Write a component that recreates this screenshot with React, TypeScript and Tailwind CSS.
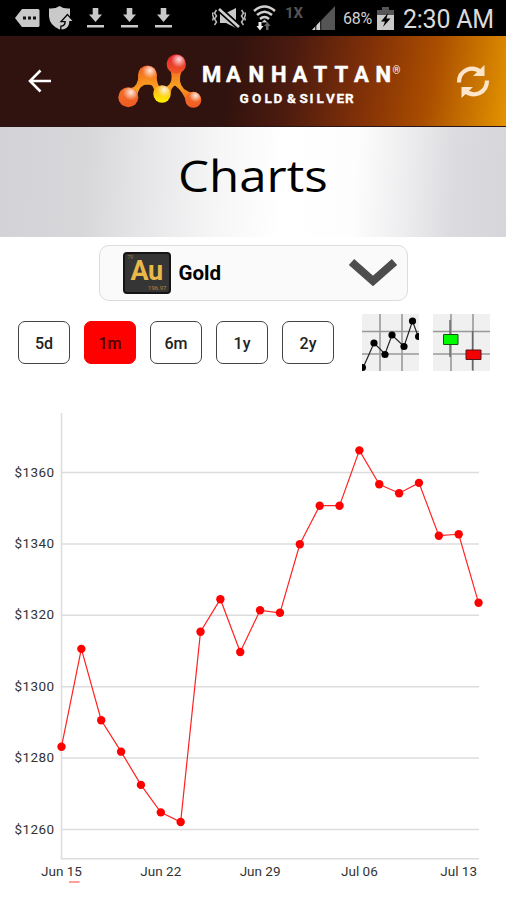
import clsx from "clsx";

const PRICES = [
  1283.2, 1310.6, 1290.6, 1281.8, 1272.5, 1264.8, 1262.1, 1315.4, 1324.5,
  1309.7, 1321.4, 1320.7, 1339.9, 1350.7, 1350.7, 1366.2, 1356.7, 1354.2,
  1357.1, 1342.3, 1342.7, 1323.5,
];
const TICKS = [1360, 1340, 1320, 1300, 1280, 1260];
const DATES = ["Jun 15", "Jun 22", "Jun 29", "Jul 06", "Jul 13"];
const RANGES = ["5d", "1m", "6m", "1y", "2y"];

const xAt = (i: number) => 61.5 + i * 19.86;
const yAt = (price: number) => 72.5 + (1360 - price) * 3.57;

function DownloadIcon() {
  return (
    <svg width="17" height="20" viewBox="0 0 17 20" fill="#c9c9c9">
      <path d="M5.700 0h5.600v6.500H15L8.500 14 2 6.500h3.700zM0 17h17v2.400H0z" />
    </svg>
  );
}

function StatusBar() {
  return (
    <div className="flex h-9 items-center bg-black pl-[15px] text-[#c9c9c9]">
      <svg width="25" height="18" viewBox="0 0 25 18">
        <path d="M7 0h16q1.500 0 1.500 1.500v15q0 1.500-1.500 1.500H7L0 9z" fill="#c9c9c9" />
        <path d="M8 7.500h3v3H8zM13 7.500h3v3h-3zM18 7.500h3v3h-3z" fill="#111" />
      </svg>
      <svg className="ml-2" width="26" height="26" viewBox="0 0 26 26">
        <path
          d="M11.500 1q4 3 10.500 2.500v7.500Q21.500 19 11.500 24.500 1.500 20 1 11.500V3.500q6.500.500 10.500-2.500z"
          fill="#c9c9c9"
        />
        <path
          d="M19.500 10.500l5 5.500h-3.200c.200 5-2.500 8-7.800 8.500v-2.700c3.200-.300 4.500-2.300 4.300-5.800h-3.300z"
          fill="#c9c9c9"
          stroke="#000"
          strokeWidth="2.600"
          paintOrder="stroke"
        />
      </svg>
      <div className="ml-[13px] flex gap-[17px]">
        <DownloadIcon />
        <DownloadIcon />
        <DownloadIcon />
      </div>
      <svg className="ml-10" width="34" height="22" viewBox="0 0 34 22" fill="none">
        <path d="M8 6h6l10-5v20l-10-5H8z" fill="#c9c9c9" />
        <path d="M7 2l19 17" stroke="#000" strokeWidth="6" />
        <path d="M7 2l20 18" stroke="#d0d0d0" strokeWidth="2.600" />
        <path
          d="M4.500 3l-2 3 2 3-2 3 2 3-2 3M1 5.500l-.5 2 1 3-1 3M29.500 3l2 3-2 3 2 3-2 3 2 3M33 5.500l.5 2-1 3 1 3"
          stroke="#bbb"
          strokeWidth="1.500"
        />
      </svg>
      <svg className="ml-[7px]" width="23" height="26" viewBox="0 0 23 26" fill="none">
        <g stroke="#d0d0d0" strokeWidth="2.500">
          <path d="M1 6q10.500-9 21 0M4 10q7.500-6.500 15 0M7 14q4.500-4 9 0" />
        </g>
        <path d="M11.500 14.500l3 3h-6z" fill="#d0d0d0" />
        <path d="M5.500 17h3v4h2L7 25.500 3.500 21h2z" fill="#eee" />
        <path d="M15.500 25h-2.500v-4h-2l3.500-4 3 4h-2z" fill="#666" />
      </svg>
      <span className="mb-[10px] ml-[9px] w-[19px] font-['Roboto',sans-serif] text-[15px] leading-none font-bold text-[#555]">
        1X
      </span>
      <svg className="ml-[8px]" width="23" height="24" viewBox="0 0 23 24">
        <path d="M23 0v24H0z" fill="#555" />
        <path d="M9 14.600V24H0z" fill="#d0d0d0" />
        <path d="M3.800 17v7M8.700 13v11" stroke="#000" strokeWidth="1" />
      </svg>
      <span className="mt-[2px] ml-[8px] w-[32px] font-['Roboto',sans-serif] text-[16px] leading-none tracking-[-0.2px] text-[#d0d0d0]">
        68%
      </span>
      <svg className="ml-[2px]" width="17" height="23" viewBox="0 0 17 23">
        <path d="M5 0h7v3h5v6H0V3h5z" fill="#555" />
        <path d="M0 8h17v15H0z" fill="#c9c9c9" />
        <path d="M11 6l-7 8.500h4L6 20l7.500-8.500H9.500z" fill="#000" />
      </svg>
      <span className="mt-[3px] ml-[9px] font-['Roboto',sans-serif] text-[25px] leading-none tracking-[-0.25px] whitespace-nowrap text-[#dadada]">
        2:30 AM
      </span>
    </div>
  );
}

function Logo() {
  return (
    <svg width="290" height="62" viewBox="116 52 290 62">
      <defs>
        <linearGradient id="bond" gradientUnits="userSpaceOnUse" x1="150" y1="60" x2="154" y2="106">
          <stop offset="0" stopColor="#ee4823" />
          <stop offset=".6" stopColor="#f9a020" />
          <stop offset="1" stopColor="#f26522" />
        </linearGradient>
        <radialGradient id="shine" cx=".62" cy=".28" r=".5">
          <stop offset="0" stopColor="#fff" stopOpacity=".85" />
          <stop offset="1" stopColor="#fff" stopOpacity="0" />
        </radialGradient>
        <linearGradient id="orange" x1="0" y1="0" x2="0" y2="1">
          <stop offset="0" stopColor="#f3702a" />
          <stop offset="1" stopColor="#ef5a22" />
        </linearGradient>
        <linearGradient id="amber" x1="0" y1="0" x2="0" y2="1">
          <stop offset="0" stopColor="#f15a24" />
          <stop offset="1" stopColor="#f99b1c" />
        </linearGradient>
        <linearGradient id="yellow" x1="0" y1="0" x2="0" y2="1">
          <stop offset="0" stopColor="#fba81c" />
          <stop offset="1" stopColor="#fff200" />
        </linearGradient>
        <linearGradient id="red" x1="0" y1="0" x2="0" y2="1">
          <stop offset="0" stopColor="#e3202a" />
          <stop offset="1" stopColor="#f15a29" />
        </linearGradient>
      </defs>
      {/* Bonds between the atoms */}
      <path
        d="M131 88Q138 87 138.500 75L156.500 74Q156.500 82 159 86L166 87Q174 83 170.500 70H182Q177 82 184 89 188 92 193 93L187 104Q184 92 175 85.500 171 87 170 96L154.500 98Q155 89 152 85.500 146 83 141 87 137 91 137 100z"
        fill="url(#bond)"
      />
      <circle cx="128.300" cy="97.300" r="10" fill="url(#orange)" />
      <circle cx="147.500" cy="75" r="9.500" fill="url(#amber)" />
      <circle cx="162" cy="94" r="8.700" fill="url(#yellow)" />
      <circle cx="176.300" cy="64" r="9.700" fill="url(#red)" />
      <circle cx="193.300" cy="99.800" r="8" fill="url(#orange)" />
      <g fill="url(#shine)">
        <circle cx="129" cy="96" r="8" />
        <circle cx="148" cy="74" r="8" />
        <circle cx="162.500" cy="93" r="7.500" />
        <circle cx="177" cy="63" r="8" />
        <circle cx="194" cy="98.500" r="6.500" />
      </g>
      <text
        x="202 226 248.500 271 292.500 313.500 334.500 354 375.500"
        y="82"
        fill="#fff"
        stroke="#fff"
        strokeWidth=".5"
        strokeLinejoin="round"
        className="font-['Roboto',sans-serif] text-[22px] font-bold"
      >
        MANHATTAN
      </text>
      <text x="392.500" y="74" fill="#fff" className="font-['Roboto',sans-serif] text-[10px] font-medium">
        ®
      </text>
      <text
        x="239.500 252 264.500 273.500 283 287 297 299.500 309.500 316.500 326 336.500 345"
        y="102.500"
        fill="#fff"
        stroke="#fff"
        strokeWidth=".3"
        className="font-['Roboto',sans-serif] text-[13.5px] font-bold"
      >
        GOLD &amp; SILVER
      </text>
    </svg>
  );
}

function Header() {
  return (
    <header className="flex h-[91px] items-center border-b border-[#291417] bg-[linear-gradient(100deg,#30120e_0%,#30120e_45%,#4c1b0f_57%,#833107_72%,#a94d00_84%,#dc8b00_98%,#e29300_100%)]">
      <svg className="ml-7" width="24" height="24" viewBox="0 0 24 24" fill="none" stroke="#fff" strokeWidth="2.600">
        <path d="M23 12H2M12.500 1.500L2 12l10.500 10.500" />
      </svg>
      <div className="mt-1 ml-16">
        <Logo />
      </div>
      <svg className="mt-[2px] ml-[50px]" width="34" height="36" viewBox="0 0 34 36" fill="none">
        <g stroke="#fde5cb" strokeWidth="4.200">
          <path d="M3 18.500C3 6 16 1 25 8" />
          <path d="M31 16.500C31 29 18 34 9 27" />
        </g>
        <path d="M28.500 1v11H17zM5.500 34V23H17z" fill="#fde5cb" />
      </svg>
    </header>
  );
}

function MetalSelect() {
  return (
    <button className="mx-auto mt-2 flex h-[56px] w-[309px] items-center rounded-[10px] border border-[#dcdcdc] bg-[#fafafa] pl-[23px]">
      <span className="flex h-[42px] w-12 flex-col rounded-[4px] border-2 border-[#151515] bg-[#353535] font-['Roboto',sans-serif] text-[#e8b84b]">
        <span className="pl-[3px] text-left text-[5px] leading-[6px] text-[#9a7b35]">79</span>
        <span className="text-center text-[27px] leading-[23px] font-bold tracking-[-0.5px]">Au</span>
        <span className="mt-[2px] pr-[2px] text-right text-[6px] leading-[6px] text-[#b08c3c]">
          196.97
        </span>
      </span>
      <span className="ml-2 font-['Roboto',sans-serif] text-[20.5px] font-bold text-black">Gold</span>
      <svg className="mr-[9px] ml-auto" width="50" height="30" viewBox="0 0 50 30" fill="none">
        <path d="M3.500 4L25 23 46.500 4" stroke="#4d4d4d" strokeWidth="8" />
      </svg>
    </button>
  );
}

function LineThumb() {
  return (
    <svg width="57" height="57" viewBox="0 0 57 57" fill="none">
      <path d="M0 0h57v57H0z" fill="#f0f0f0" />
      <path d="M18 0v57M40 0v57M0 17.500h57M0 40h57" stroke="#999" strokeWidth="1.600" />
      <path d="M1 54L12 29 23 40 30 21 42 32.500 50.500 7 56 22" stroke="#222" strokeWidth="1.200" />
      <g fill="#000">
        <circle cx="0.500" cy="53.500" r="3.500" />
        <circle cx="12" cy="29" r="3.600" />
        <circle cx="23" cy="40.500" r="3.600" />
        <circle cx="30" cy="21" r="3.600" />
        <circle cx="42" cy="32.500" r="3.600" />
        <circle cx="50.500" cy="7" r="3.600" />
        <circle cx="56.500" cy="22.500" r="3.500" />
      </g>
    </svg>
  );
}

function CandleThumb() {
  return (
    <svg width="57" height="57" viewBox="0 0 57 57" fill="none">
      <path d="M0 0h57v57H0z" fill="#f0f0f0" />
      <path d="M18 0v57M40 0v57M0 17.500h57M0 40h57" stroke="#999" strokeWidth="1.600" />
      <path d="M17 6v37M39.500 17v39" stroke="#666" strokeWidth="1.400" />
      <path d="M10.500 20.500h14.500v10H10.500z" fill="#00fb00" stroke="#185018" />
      <path d="M33 36h15v9.500H33z" fill="#f50000" stroke="#501818" />
    </svg>
  );
}

function PriceChart() {
  const points = PRICES.map((p, i) => `${xAt(i)},${yAt(p)}`).join(" ");

  return (
    <svg
      width="506"
      height="500"
      viewBox="0 0 506 500"
      className="block font-['Roboto',sans-serif] text-[13.5px]"
    >
      {/* Grid and axes */}
      {TICKS.map((t) => (
        <g key={t}>
          <path d={`M61 ${yAt(t)}H479`} stroke="#dcdcdc" strokeWidth="1.500" />
          <text x="14.500" y={yAt(t) + 4} fill="#333" textLength="39.500">
            ${t}
          </text>
        </g>
      ))}
      <path d="M61.500 13V458.800H479" fill="none" stroke="#dcdcdc" strokeWidth="1.500" />
      {DATES.map((d, i) => (
        <text key={d} x={xAt(i * 5)} y="475.500" fill="#333" textAnchor="middle">
          {d}
        </text>
      ))}
      <path d="M69 482h10.500" stroke="#f66" strokeWidth="1.300" />

      {/* Series */}
      <polyline points={points} fill="none" stroke="#f22" strokeWidth="1.200" />
      {PRICES.map((p, i) => (
        <circle key={i} cx={xAt(i)} cy={yAt(p)} r="4.200" fill="#f00" />
      ))}
    </svg>
  );
}

export default function App() {
  return (
    <div className="flex h-[900px] w-[506px] flex-col overflow-hidden bg-white">
      <StatusBar />
      <Header />
      <div className="flex h-[110px] justify-center bg-[linear-gradient(93deg,#d3d2d6_0%,#d7d7da_17%,#e6e6e8_29%,#f6f6f7_43%,#fff_56%,#fdfdfd_70%,#ededef_80%,#dcdce0_89%,#d6d6da_100%)] pt-[23px]">
        <h1 className="scale-x-[1.12] font-['Open_Sans',sans-serif] text-[44px] leading-[50px] text-black">
          Charts
        </h1>
      </div>
      <MetalSelect />

      {/* Range and chart type */}
      <div className="mt-[13px] flex h-[57px] items-center pl-[18px]">
        <div className="flex gap-[14px]">
          {RANGES.map((r) => (
            <button
              key={r}
              className={clsx(
                "h-[43px] w-[52px] rounded-[7px] border pt-[2px] font-['Roboto',sans-serif] text-[16px] font-medium",
                r === "1m"
                  ? "border-[#f00] bg-[#f00] text-[#400]"
                  : "border-[#444] bg-white text-[#222]",
              )}
            >
              {r}
            </button>
          ))}
        </div>
        <div className="ml-[28px] flex gap-[14px]">
          <LineThumb />
          <CandleThumb />
        </div>
      </div>
      <div className="mt-[29px]">
        <PriceChart />
      </div>
    </div>
  );
}
